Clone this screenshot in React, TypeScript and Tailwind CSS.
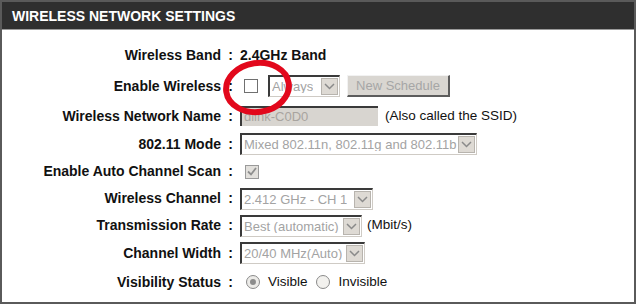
import React from "react";

const font = { fontFamily: '"Liberation Sans", Arial, sans-serif' };

function Arrow() {
  return (
    <div className="flex h-[17px] w-[17px] shrink-0 items-center justify-center border border-[#b8b4ae] bg-[#dedad4]">
      <svg width="11" height="7" viewBox="0 0 11 7">
        <path d="M1 1 L5.5 5.5 L10 1" fill="none" stroke="#8a8a8a" strokeWidth="1.5" />
      </svg>
    </div>
  );
}

function Select({ w, text }: { w: string; text: string }) {
  return (
    <div
      className={`flex h-[22px] ${w} items-center justify-between border-t-2 border-l-2 border-b border-r border-t-[#3a3a3a] border-l-[#3a3a3a] border-b-[#cfcbc5] border-r-[#cfcbc5] bg-white pl-[2px] pr-[1px]`}
    >
      <span className="overflow-hidden whitespace-nowrap text-[13px] leading-none text-[#a3a3a3]">{text}</span>
      <Arrow />
    </div>
  );
}

function Row({ label, h, children }: { label: string; h: string; children?: React.ReactNode }) {
  return (
    <div className={`flex ${h} items-center`}>
      <div className="w-[219px] shrink-0 text-right text-[14px] font-bold text-[#111]">{label}</div>
      <div className="w-[19px] shrink-0 text-center text-[14px] font-bold text-[#111]">:</div>
      <div className="flex items-center">{children}</div>
    </div>
  );
}

export default function App() {
  return (
    <div className="relative h-[305px] w-[640px] bg-white" style={font}>
      <div className="flex h-[304px] w-[636px] flex-col border-2 border-[#5a5a5a] bg-white">
        <div className="flex h-[28px] shrink-0 items-center border-b border-b-[#9a9a9a] bg-[#2f2f2f] pl-[10px] pt-[2px]">
          <span className="text-[14px] font-bold tracking-normal text-white">WIRELESS NETWORK SETTINGS</span>
        </div>
        <div className="flex flex-col pt-[10px]">
          <Row label="Wireless Band" h="h-[30px]">
            <span className="text-[14px] font-bold text-[#111]">2.4GHz Band</span>
          </Row>
          <Row label="Enable Wireless" h="h-[32px]">
            <div className="ml-[4px] h-[14px] w-[14px] border border-[#707070] bg-white" />
            <div className="ml-[10px]">
              <Select w="w-[72px]" text="Always" />
            </div>
            <div className="ml-[7px] flex h-[22px] w-[103px] items-center justify-center border-t border-l border-t-[#f2f2f2] border-l-[#f2f2f2] border-r-2 border-b-2 border-r-[#5c5c5c] border-b-[#5c5c5c] bg-[#d9d6d1] text-[13px] text-[#a6a6a6]">
              New Schedule
            </div>
          </Row>
          <Row label="Wireless Network Name" h="h-[28px]">
            <div className="flex h-[20px] w-[138px] items-center border-t-2 border-l-2 border-t-[#3a3a3a] border-l-[#3a3a3a] bg-[#d8d5d0] pl-[2px] text-[13px] text-[#a8a49f]">
              dlink-C0D0
            </div>
            <span className="ml-[7px] text-[13.5px] text-[#111]">(Also called the SSID)</span>
          </Row>
          <Row label="802.11 Mode" h="h-[28px]">
            <Select w="w-[237px]" text="Mixed 802.11n, 802.11g and 802.11b" />
          </Row>
          <Row label="Enable Auto Channel Scan" h="h-[27px]">
            <div className="ml-[5px] flex h-[14px] w-[14px] items-center justify-center border border-[#9a9a9a] bg-[#e2e0dc]">
              <svg width="10" height="9" viewBox="0 0 10 9">
                <path d="M1 4.5 L4 7.5 L9 1" fill="none" stroke="#8e8e8e" strokeWidth="1.8" />
              </svg>
            </div>
          </Row>
          <Row label="Wireless Channel" h="h-[27px]">
            <Select w="w-[133px]" text="2.412 GHz - CH 1" />
          </Row>
          <Row label="Transmission Rate" h="h-[27px]">
            <Select w="w-[122px]" text="Best (automatic)" />
            <span className="ml-[5px] text-[13.5px] text-[#111]">(Mbit/s)</span>
          </Row>
          <Row label="Channel Width" h="h-[28px]">
            <Select w="w-[125px]" text="20/40 MHz(Auto)" />
          </Row>
          <Row label="Visibility Status" h="h-[30px]">
            <div className="ml-[6px] flex h-[14px] w-[14px] items-center justify-center rounded-full border border-[#8a8a8a] bg-[#ecebe8]">
              <div className="h-[6px] w-[6px] rounded-full bg-[#8c8c8c]" />
            </div>
            <span className="ml-[8px] text-[13.5px] text-[#111]">Visible</span>
            <div className="ml-[8px] h-[14px] w-[14px] rounded-full border border-[#8a8a8a] bg-[#f2f1ee]" />
            <span className="ml-[9px] text-[13.5px] text-[#111]">Invisible</span>
          </Row>
        </div>
      </div>
      <svg className="pointer-events-none absolute left-[220px] top-[57px]" width="76" height="62" viewBox="0 0 76 62">
        <ellipse cx="37.5" cy="30.5" rx="31.5" ry="24.5" fill="none" stroke="#e2081c" strokeWidth="6" transform="rotate(-8 37.5 30.5)" />
      </svg>
    </div>
  );
}
